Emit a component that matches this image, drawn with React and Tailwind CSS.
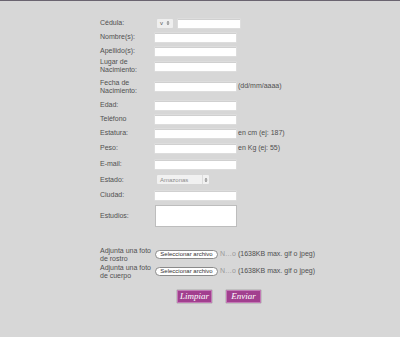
import React from 'react';

const Label = ({ children }) => (
    <div className="w-[55px] shrink-0 text-[7px] leading-[8px] text-[#505050]">{children}</div>
);

const Input = ({ w = 'w-[81px]' }) => (
    <div className={`${w} h-[9px] bg-white border-t border-[#d0d0d0] shadow-[0_0_0_0.5px_#e4e4e4]`} />
);

const Hint = ({ children }) => (
    <span className="ml-[2px] text-[7px] text-[#505050]">{children}</span>
);

// tiny up/down arrows of a native select
const Arrows = () => (
    <svg width="4" height="6" viewBox="0 0 4 6" className="shrink-0">
        <path d="M0.5 2.5 L2 1 L3.5 2.5 Z M0.5 3.5 L2 5 L3.5 3.5 Z" fill="#666" />
    </svg>
);

const FileRow = ({ l1, l2, mt }) => (
    <div className={`flex items-center h-[17px] ${mt}`}>
        <Label>
            {l1}
            <br />
            {l2}
        </Label>
        <div className="flex items-center">
            <div className="w-[63px] h-[9px] rounded-full border border-[#8a8a8a] bg-white text-[6px] leading-[7px] text-[#333] text-center">
                Seleccionar archivo
            </div>
            <span className="ml-[2px] text-[7px] text-[#9a9a9a]">N…o</span>
            <span className="ml-[2px] text-[7px] text-[#505050]">(1638KB max. gif o jpeg)</span>
        </div>
    </div>
);

export default function App() {
    return (
        <div
            className="w-[400px] h-[337px] bg-[#d7d7d7] border-t border-[#6a6470] overflow-hidden"
            style={{ fontFamily: '"Liberation Sans", Arial, sans-serif' }}
        >
            <div className="ml-[100px] pt-[17px]">
                <div className="flex items-center h-[10px]">
                    <Label>Cédula:</Label>
                    <div className="ml-[2px] flex items-center w-[16px] h-[9px] bg-[#efefef] rounded-[1px] text-[6px] text-[#555]">
                        <span className="ml-[3px] leading-[6px]">v</span>
                        <span className="ml-[3px] flex">
                            <Arrows />
                        </span>
                    </div>
                    <div className="ml-[5px]">
                        <Input w="w-[62px]" />
                    </div>
                </div>

                <div className="flex items-center h-[10px] mt-[4px]">
                    <Label>Nombre(s):</Label>
                    <Input />
                </div>

                <div className="flex items-center h-[10px] mt-[4px]">
                    <Label>Apellido(s):</Label>
                    <Input />
                </div>

                <div className="flex items-center h-[16px] mt-[2px]">
                    <Label>
                        Lugar de
                        <br />
                        Nacimiento:
                    </Label>
                    <Input />
                </div>

                <div className="flex items-center h-[17px] mt-[4px]">
                    <Label>
                        Fecha de
                        <br />
                        Nacimiento:
                    </Label>
                    <Input />
                    <Hint>(dd/mm/aaaa)</Hint>
                </div>

                <div className="flex items-center h-[10px] mt-[5px]">
                    <Label>Edad:</Label>
                    <Input />
                </div>

                <div className="flex items-center h-[10px] mt-[4px]">
                    <Label>Teléfono</Label>
                    <Input />
                </div>

                <div className="flex items-center h-[10px] mt-[4px]">
                    <Label>Estatura:</Label>
                    <Input />
                    <Hint>en cm (ej: 187)</Hint>
                </div>

                <div className="flex items-center h-[10px] mt-[5px]">
                    <Label>Peso:</Label>
                    <Input />
                    <Hint>en Kg (ej: 55)</Hint>
                </div>

                <div className="flex items-center h-[10px] mt-[6px]">
                    <Label>E-mail:</Label>
                    <Input />
                </div>

                <div className="flex items-center h-[11px] mt-[5px]">
                    <Label>Estado:</Label>
                    <div className="ml-[2px] flex items-center w-[52px] h-[9px] bg-[#f1f1f1] rounded-[1px] text-[6px] leading-[6px] text-[#8a8a8a]">
                        <span className="ml-[3px] flex-1">Amazonas</span>
                        <span className="w-[7px] h-full border-l border-[#dcdcdc] flex items-center justify-center">
                            <Arrows />
                        </span>
                    </div>
                </div>

                <div className="flex items-center h-[10px] mt-[5px]">
                    <Label>Ciudad:</Label>
                    <Input />
                </div>

                <div className="flex items-center h-[22px] mt-[5px]">
                    <Label>Estudios:</Label>
                    <div className="w-[82px] h-[22px] bg-white border border-[#bdbdbd]" />
                </div>

                <FileRow l1="Adjunta una foto" l2="de rostro" mt="mt-[19px]" />
                <FileRow l1="Adjunta una foto" l2="de cuerpo" mt="mt-0" />

                <div className="flex mt-[10px] ml-[77px] gap-[14px]">
                    <button
                        className="w-[35px] h-[13px] bg-[#a23f8f] border border-[#c27bb5] shadow-[0_0_1px_#555] text-white text-[9px] leading-[11px] italic"
                        style={{ fontFamily: '"Liberation Serif", serif' }}
                    >
                        Limpiar
                    </button>
                    <button
                        className="w-[35px] h-[13px] bg-[#a23f8f] border border-[#c27bb5] shadow-[0_0_1px_#555] text-white text-[9px] leading-[11px] italic"
                        style={{ fontFamily: '"Liberation Serif", serif' }}
                    >
                        Enviar
                    </button>
                </div>
            </div>
        </div>
    );
}
